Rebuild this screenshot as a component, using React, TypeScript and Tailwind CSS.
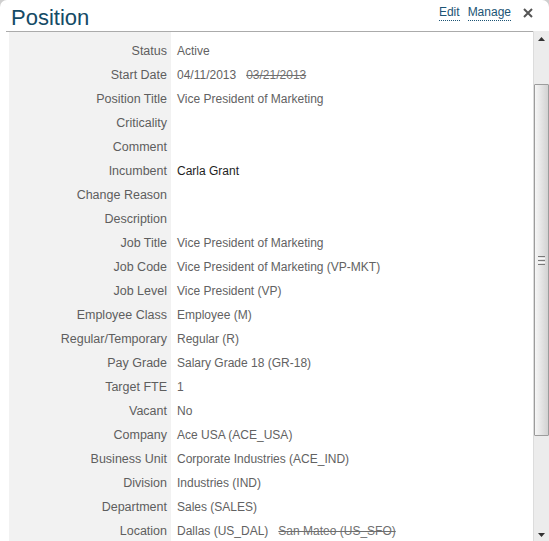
import React from "react";

type Row = { label: string; value?: React.ReactNode; dark?: boolean };

const Old = ({ children }: { children: React.ReactNode }) => (
  <span className="ml-[10px] line-through text-[#707070]">{children}</span>
);

const rows: Row[] = [
  { label: "Status", value: "Active" },
  { label: "Start Date", value: <>04/11/2013<Old>03/21/2013</Old></> },
  { label: "Position Title", value: "Vice President of Marketing" },
  { label: "Criticality" },
  { label: "Comment" },
  { label: "Incumbent", value: "Carla Grant", dark: true },
  { label: "Change Reason" },
  { label: "Description" },
  { label: "Job Title", value: "Vice President of Marketing" },
  { label: "Job Code", value: "Vice President of Marketing (VP-MKT)" },
  { label: "Job Level", value: "Vice President (VP)" },
  { label: "Employee Class", value: "Employee (M)" },
  { label: "Regular/Temporary", value: "Regular (R)" },
  { label: "Pay Grade", value: "Salary Grade 18 (GR-18)" },
  { label: "Target FTE", value: "1" },
  { label: "Vacant", value: "No" },
  { label: "Company", value: "Ace USA (ACE_USA)" },
  { label: "Business Unit", value: "Corporate Industries (ACE_IND)" },
  { label: "Division", value: "Industries (IND)" },
  { label: "Department", value: "Sales (SALES)" },
  { label: "Location", value: <>Dallas (US_DAL)<Old>San Mateo (US_SFO)</Old></> },
];

export default function App() {
  return (
    <div
      className="w-[549px] h-[541px] overflow-hidden bg-[#cfcfcf]"
      style={{ fontFamily: '"Liberation Sans", Arial, sans-serif' }}
    >
      <div className="relative w-full h-full bg-white rounded-t-[7px] flex flex-col">
        {/* header */}
        <div className="h-[31px] shrink-0 flex items-start justify-between">
          <div className="pl-[11px] pt-[7px] text-[22px] leading-[22px] text-[#154b66]">Position</div>
          <div className="flex items-start pt-[5px] pr-[16px] text-[12px] leading-[14px] text-[#1c5474]">
            <span className="border-b border-dotted border-[#1c5474] pb-[1px]">Edit</span>
            <span className="ml-[8px] border-b border-dotted border-[#1c5474] pb-[1px]">Manage</span>
            <svg className="ml-[12px] mt-[3px]" width="10" height="10" viewBox="0 0 10 10">
              <path d="M1 1 L9 9 M9 1 L1 9" stroke="#555" strokeWidth="2" />
            </svg>
          </div>
        </div>
        {/* body */}
        <div className="flex flex-1 min-h-0">
          <div className="flex-1 min-w-0 flex flex-col">
            <div className="ml-[6px] h-px bg-[#ababab]" />
            <div className="flex-1 min-h-0 overflow-hidden pl-[9px]">
              <div className="relative">
                <div className="absolute left-0 top-0 w-[162px] h-[600px] bg-[#f2f2f2]" />
                <div className="relative pt-[7px]">
                  {rows.map((r) => (
                    <div key={r.label} className="flex h-[24px] items-center leading-[14px]">
                      <div className="w-[162px] shrink-0 text-right pr-[4px] text-[12.5px] text-[#5e5e5e]">{r.label}</div>
                      <div className={`pl-[6px] whitespace-nowrap text-[12px] ${r.dark ? "text-[#1e1e1e]" : "text-[#626262]"}`}>
                        {r.value}
                      </div>
                    </div>
                  ))}
                </div>
              </div>
            </div>
          </div>
          {/* scrollbar */}
          <div className="w-[16px] shrink-0 flex flex-col bg-[#ececec] border-l border-[#dcdcdc]">
            <div className="h-[53px] shrink-0 flex justify-center pt-[6px]">
              <svg width="7" height="4" viewBox="0 0 7 4">
                <path d="M3.5 0 L7 4 L0 4 Z" fill="#333" />
              </svg>
            </div>
            <div
              className="h-[352px] shrink-0 border border-[#9c9c9c] rounded-[1px] flex items-center justify-center"
              style={{ background: "linear-gradient(to right, #f6f6f6 0%, #e6e6e6 45%, #d2d2d2 100%)" }}
            >
              <div className="flex flex-col gap-[1px]">
                <div className="w-[7px] h-px bg-[#7a7a7a]" />
                <div className="w-[7px] h-px bg-[#f8f8f8]" />
                <div className="w-[7px] h-px bg-[#7a7a7a]" />
                <div className="w-[7px] h-px bg-[#f8f8f8]" />
                <div className="w-[7px] h-px bg-[#7a7a7a]" />
              </div>
            </div>
            <div className="flex-1 flex items-end justify-center pb-[4px]">
              <svg width="7" height="4" viewBox="0 0 7 4">
                <path d="M0 0 L7 0 L3.5 4 Z" fill="#333" />
              </svg>
            </div>
          </div>
        </div>
      </div>
    </div>
  );
}
